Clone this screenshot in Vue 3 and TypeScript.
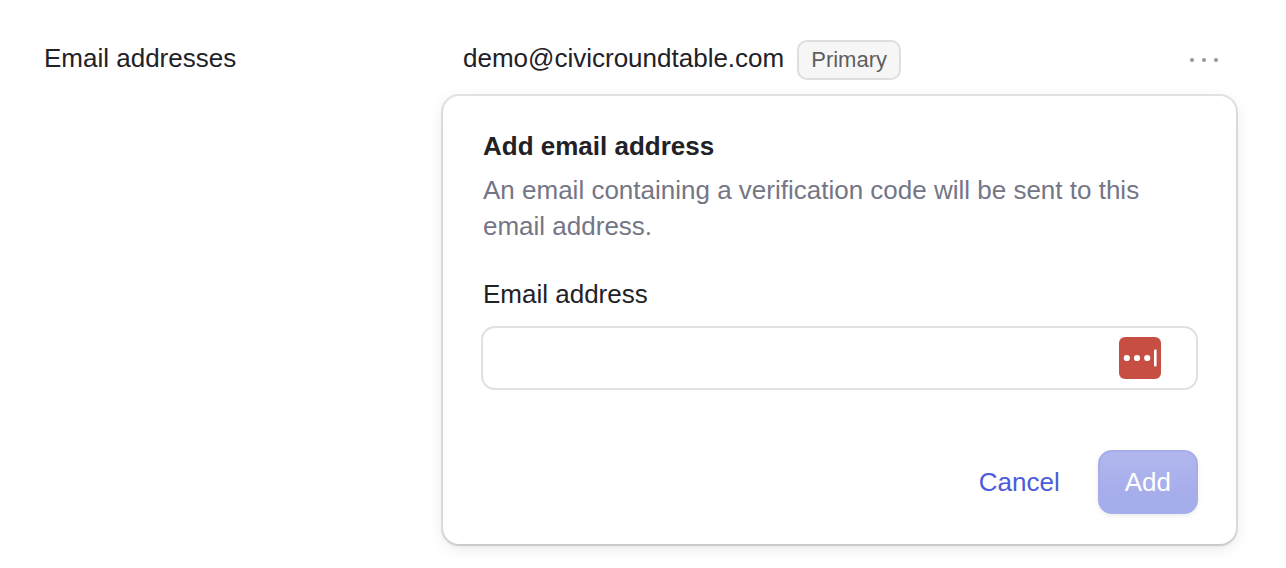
<script setup lang="ts">
import { ref } from 'vue'

const email = ref('')
</script>

<template>
  <main class="section">
    <h1 class="section-title">Email addresses</h1>
    <div class="content">
      <div class="row">
        <span class="address">demo@civicroundtable.com</span>
        <span class="badge">Primary</span>
        <button class="menu" type="button" aria-label="Open menu">
          <svg width="32" height="8" viewBox="0 0 32 8" fill="#969696">
            <circle cx="4" cy="4" r="2" />
            <circle cx="16" cy="4" r="2" />
            <circle cx="28" cy="4" r="2" />
          </svg>
        </button>
      </div>
      <form class="card" @submit.prevent>
        <h2 class="card-title">Add email address</h2>
        <p class="hint">An email containing a verification code will be sent to this email address.</p>
        <label class="label" for="email">Email address</label>
        <div class="field">
          <input id="email" v-model="email" class="input" type="email" />
          <svg class="manager" width="42" height="42" viewBox="0 0 42 42">
            <rect width="42" height="42" rx="6" fill="#c74e43" />
            <g fill="#fff">
              <circle cx="7.8" cy="21" r="3.1" />
              <circle cx="18" cy="21" r="3.1" />
              <circle cx="28.2" cy="21" r="3.1" />
              <rect x="35" y="12.5" width="2.6" height="17" rx="1" />
            </g>
          </svg>
        </div>
        <div class="actions">
          <button class="cancel" type="button">Cancel</button>
          <button class="add" type="submit">Add</button>
        </div>
      </form>
    </div>
  </main>
</template>

<style>
body {
  background: #fff;
}
</style>

<style scoped>
.section {
  box-sizing: border-box;
  display: grid;
  grid-template-columns: 399px 1fr;
  padding: 40px 50px 24px 44px;
  font-family: "Liberation Sans", Arial, sans-serif;
  font-size: 26px;
  line-height: 36px;
  color: #212126;
}
.section-title {
  margin: 0;
  font-size: 26px;
  font-weight: 400;
}
.row {
  display: flex;
  align-items: center;
  height: 40px;
  padding: 0 16px 0 20px;
}
.address {
  align-self: flex-start;
}
.badge {
  box-sizing: border-box;
  height: 40px;
  margin-left: 13px;
  padding: 0 12px;
  border: 2px solid #dedede;
  border-radius: 10px;
  background: #f6f6f6;
  color: #5e5e5e;
  font-size: 22px;
}
button {
  font: inherit;
  border: 0;
  cursor: pointer;
}
.menu {
  display: flex;
  margin-left: auto;
  padding: 0;
  background: none;
}
.card {
  margin-top: 16px;
  padding: 32px 38px 30px;
  border-radius: 16px;
  background: #fff;
  box-shadow: 0 0 0 2px #00000018, 0 2px 3px #191c2118, 0 4px 16px #00000018;
}
.card-title {
  margin: 0;
  padding: 0 2px;
  font-size: 26px;
  font-weight: 700;
}
.hint {
  margin: 8px 0 32px;
  padding: 0 2px;
  color: #747686;
}
.label {
  display: block;
  padding: 0 2px;
}
.field {
  position: relative;
  margin-top: 14px;
}
.input {
  box-sizing: border-box;
  display: block;
  width: 100%;
  height: 64px;
  padding: 0 84px 0 24px;
  border: 2px solid #e0e0e0;
  border-radius: 14px;
  background: #fff;
  font: inherit;
}
.manager {
  position: absolute;
  top: 11px;
  right: 37px;
}
.actions {
  display: flex;
  justify-content: flex-end;
  gap: 14px;
  margin-top: 60px;
}
.cancel {
  padding: 14px 24px;
  background: none;
  color: #4c5bd9;
}
.add {
  padding: 12px 25px;
  border: 2px solid #a5adeb;
  border-radius: 14px;
  background: linear-gradient(#b1b7ed, #a6adeb 70%);
  box-shadow: 0 2px 4px #00000014;
  color: #fff;
}
</style>
